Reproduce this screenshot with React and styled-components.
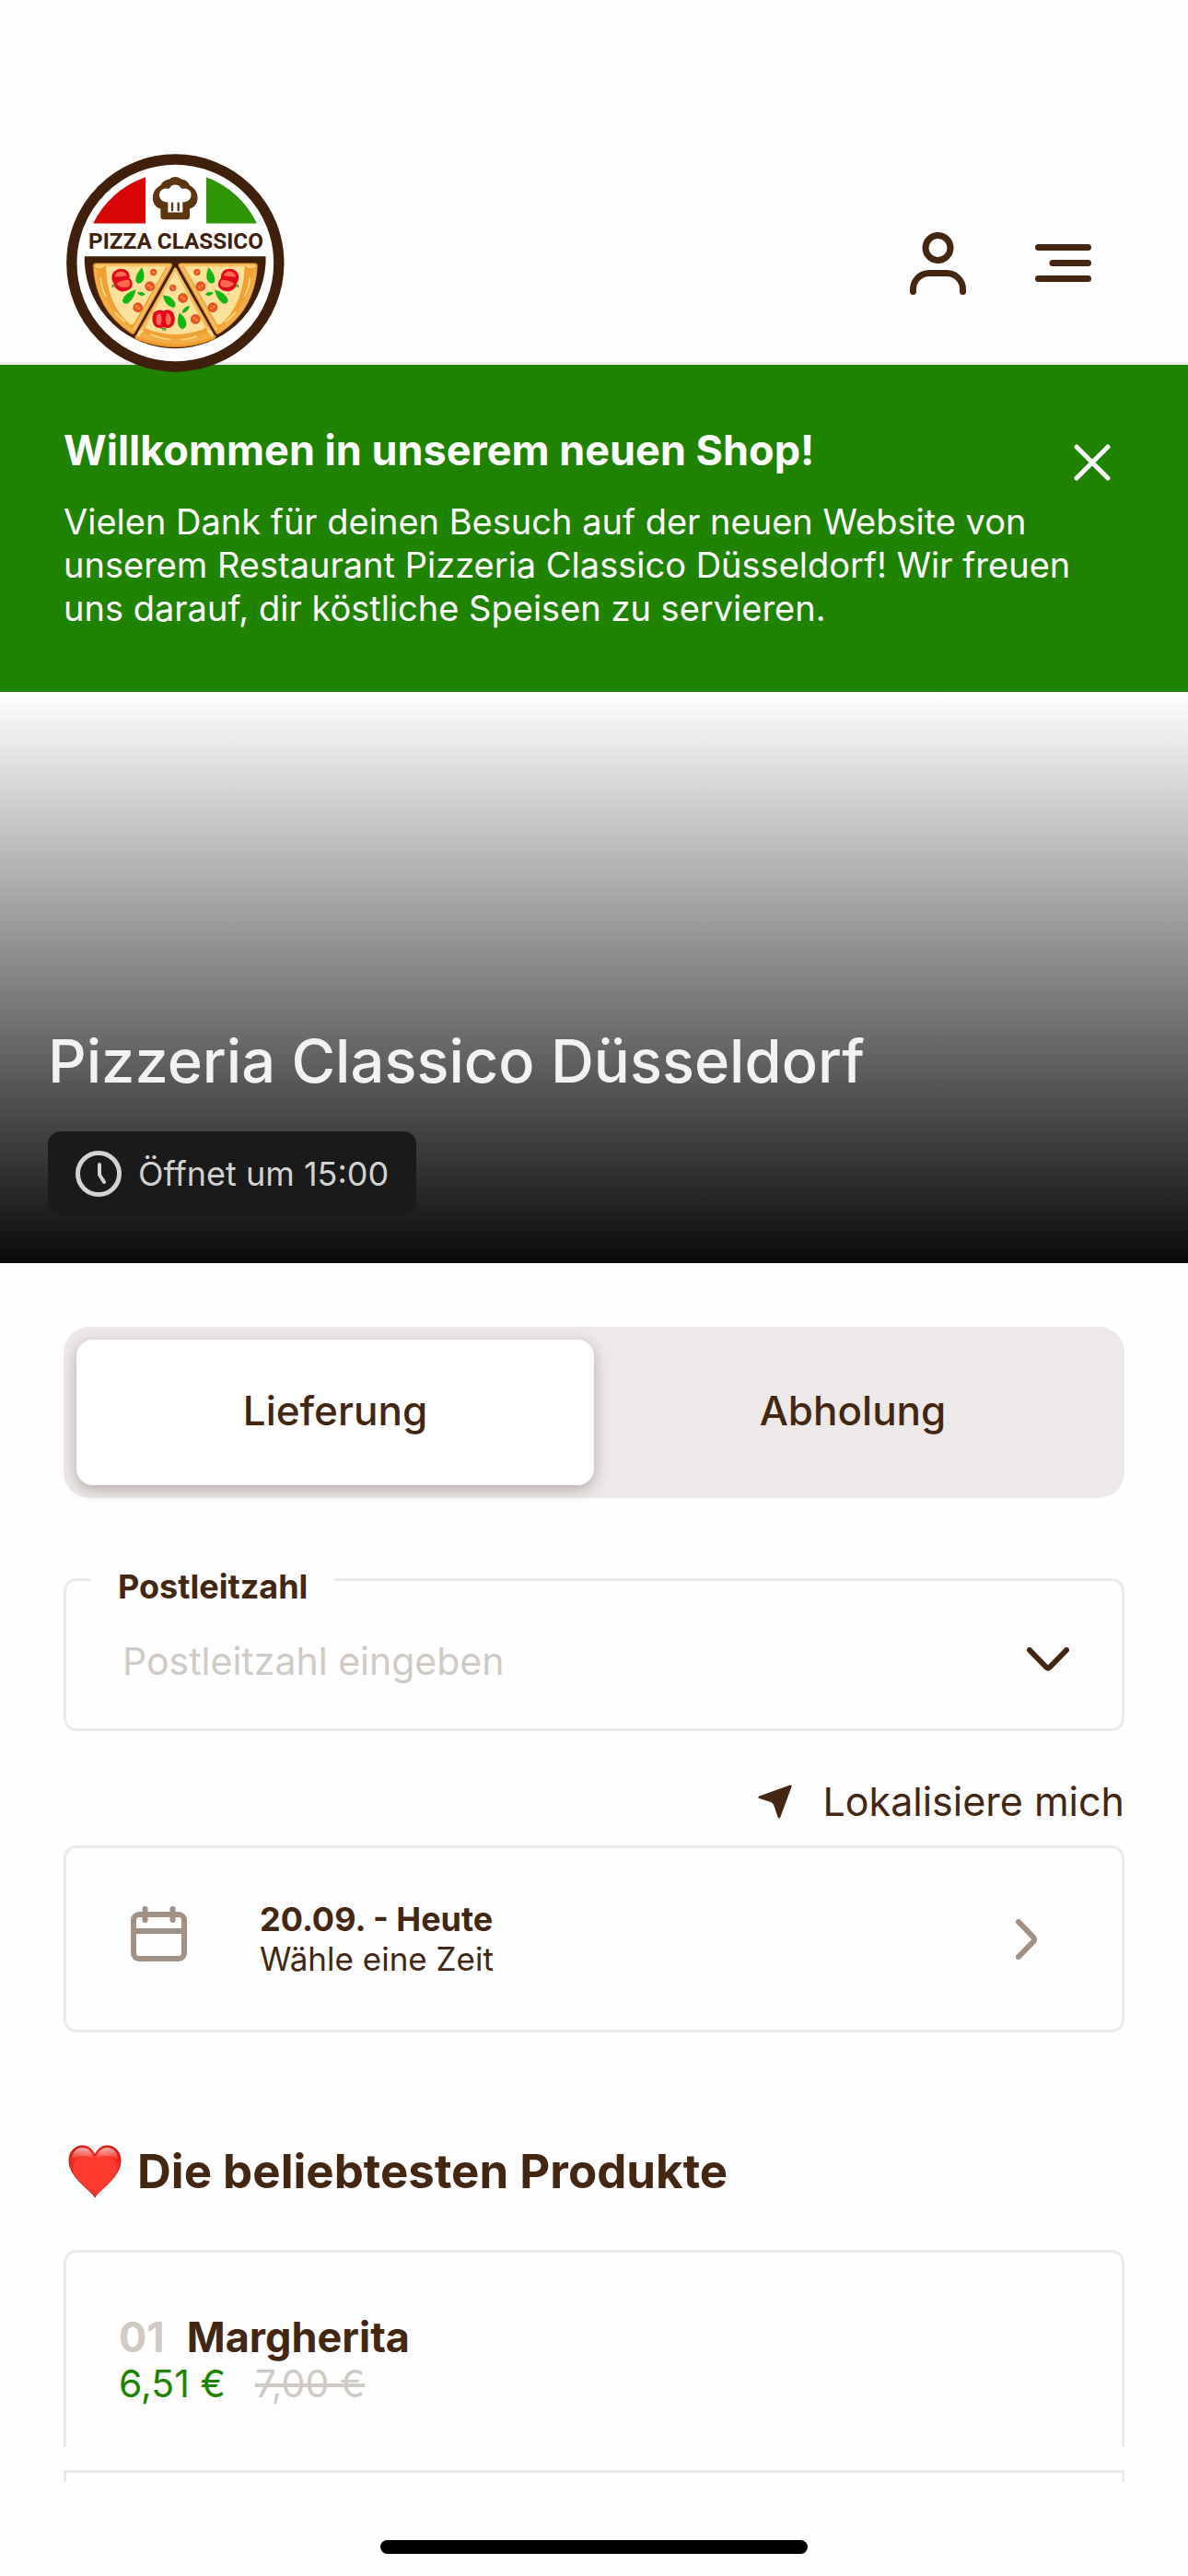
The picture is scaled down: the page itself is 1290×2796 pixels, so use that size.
import React, { useState } from 'react'
import styled, { createGlobalStyle } from 'styled-components'

const brown = '#432713'
const green = '#208300'
const line = '#ebe9e9'
const muted = '#a09184'
const faded = '#d0cac5'

const GlobalStyle = createGlobalStyle`
  * {
    box-sizing: border-box;
  }
  body {
    margin: 0;
    background: #fefefe;
    color: ${brown};
    font-family: Inter, "Liberation Sans", sans-serif;
  }
  button, input {
    font-family: inherit;
    color: inherit;
  }
  svg {
    display: block;
    flex: none;
  }
`

const Page = styled.div`
  display: flex;
  flex-direction: column;
  min-height: 100vh;
`

const Header = styled.header`
  display: flex;
  align-items: center;
  justify-content: space-between;
  padding: 178px 105px 0 72px;
  border-bottom: 3px solid ${line};
`

const LogoLink = styled.a`
  position: relative;
  z-index: 1;
  margin: -11px 0;
`

const HeaderActions = styled.nav`
  display: flex;
  align-items: center;
  gap: 75px;
`

const IconButton = styled.button`
  display: block;
  flex: none;
  padding: 0;
  border: 0;
  background: none;
  cursor: pointer;
`

const Banner = styled.section`
  display: flex;
  align-items: flex-start;
  justify-content: space-between;
  padding: 66px 84px 67px 69px;
  background: ${green};
  color: #fff;
`

const BannerClose = styled(IconButton)`
  margin-top: 20px;
`

const BannerTitle = styled.h2`
  margin: 0 0 27px;
  font-size: 45px;
  line-height: 54px;
  font-weight: 700;
`

const BannerText = styled.p`
  margin: 0;
  font-size: 38px;
  line-height: 47px;
`

const Hero = styled.section`
  display: flex;
  flex-direction: column;
  justify-content: flex-end;
  align-items: flex-start;
  gap: 34px;
  min-height: 620px;
  padding: 52px;
  background: linear-gradient(#fff, #0a0a0a);
`

const HeroTitle = styled.h1`
  margin: 0;
  color: #f2f2f2;
  font-size: 65px;
  line-height: 84px;
  font-weight: 500;
`

const OpeningChip = styled.div`
  display: flex;
  align-items: center;
  gap: 18px;
  height: 91px;
  padding: 0 30px;
  border-radius: 14px;
  background: #1a1a1a;
  color: #d2d2d2;
  font-size: 36px;
`

const Main = styled.main`
  padding: 69px;
  padding-bottom: 0;
`

const Tabs = styled.div`
  display: grid;
  grid-template-columns: 1fr 1fr;
  padding: 14px;
  border-radius: 28px;
  background: #ede9e8;
`

const Tab = styled.button`
  height: 158px;
  padding: 0 0 4px;
  border: 0;
  border-radius: 18px;
  background: ${p => (p.$active ? '#fff' : 'none')};
  box-shadow: ${p => (p.$active ? '0 5px 16px rgba(60, 40, 40, 0.32)' : 'none')};
  font-size: 44px;
  font-weight: 500;
  cursor: pointer;
`

const Field = styled.div`
  position: relative;
  display: flex;
  align-items: center;
  height: 166px;
  margin-top: 87px;
  padding: 10px 57px 0 59px;
  border: 3px solid ${line};
  border-radius: 14px;
`

const FieldLabel = styled.label`
  position: absolute;
  top: -15px;
  left: 27px;
  padding: 0 29px;
  background: #fefefe;
  font-size: 36px;
  line-height: 43px;
  font-weight: 700;
`

const FieldInput = styled.input`
  flex: 1;
  min-width: 0;
  height: 100%;
  padding: 3px 2px 0;
  border: 0;
  outline: 0;
  background: none;
  font-size: 41px;
  &::placeholder {
    color: ${faded};
    opacity: 1;
  }
`

const LocateButton = styled.button`
  display: flex;
  align-items: center;
  gap: 33px;
  margin: 50px 0 22px auto;
  padding: 0;
  border: 0;
  background: none;
  font-size: 43px;
  line-height: 52px;
  cursor: pointer;
`

const TimeButton = styled.button`
  display: flex;
  align-items: center;
  width: 100%;
  height: 203px;
  padding: 0 92px 0 70px;
  border: 3px solid ${line};
  border-radius: 14px;
  background: none;
  text-align: left;
  font-size: 35px;
  line-height: 43px;
  cursor: pointer;
`

const TimeText = styled.span`
  flex: 1;
  margin-left: 79px;
  b {
    display: block;
    font-size: 36px;
    font-weight: 700;
  }
`

const SectionTitle = styled.h2`
  display: flex;
  align-items: center;
  gap: 17px;
  margin: 121px 0 55px;
  padding-left: 5px;
  font-size: 51px;
  line-height: 60px;
  font-weight: 700;
`

const ProductList = styled.div`
  display: grid;
  gap: 25px;
`

const ProductCard = styled.article`
  padding: 66px 57px 45px;
  border: 3px solid ${line};
  border-bottom: 0;
  border-radius: 14px 14px 0 0;
`

const NextCard = styled.div`
  height: 13px;
  border: 3px solid ${line};
  border-bottom: 0;
`

const ProductName = styled.h3`
  margin: 0;
  font-size: 45px;
  line-height: 52px;
  font-weight: 700;
  span {
    margin-right: 24px;
    color: ${faded};
  }
`

const Prices = styled.p`
  display: flex;
  gap: 32px;
  margin: 0;
  color: ${green};
  font-size: 41px;
  line-height: 48px;
  ins {
    text-decoration: none;
  }
  del {
    color: ${faded};
  }
`

const HomeIndicator = styled.div`
  width: 36%;
  height: 15px;
  margin: auto auto 24px;
  border-radius: 8px;
  background: #000;
`

// one slice pointing up, drawn at the lower middle of the pan
const Slice = () => (
  <g>
    <path d="M420 420 L552 645 Q552 652 545 656 Q420 706 294 656 Q287 652 290 644 Z" fill="#efa133" stroke="#c97a1c" strokeWidth="2" />
    <path d="M301 628 Q420 682 539 628 L545 645 Q420 696 295 645 Z" fill="#f3ad45" />
    <path d="M420 432 L519 610 Q520 618 510 623 Q420 656 330 623 Q318 618 321 610 Z" fill="#fde09a" />
    <path d="M420 424 L321 612 L303 634 M420 424 L519 612 L537 634" fill="none" stroke="#f6bf62" strokeWidth="8" />
    <path d="M419 412 L288 642 M421 412 L552 642" fill="none" stroke="#3e200c" strokeWidth="7" />
    <path d="M340 640 Q372 654 402 656 M440 656 Q472 655 488 646" fill="none" stroke="#fbd583" strokeWidth="5" strokeLinecap="round" />
    <path d="M300 644 Q302 632 312 628 M540 644 Q538 632 528 628" fill="none" stroke="#fbe0a0" strokeWidth="7" strokeLinecap="round" />
    <g fill="#ee5426" stroke="#c93c14" strokeWidth="2">
      <circle cx="412" cy="488" r="10" />
      <circle cx="445" cy="521" r="15" />
      <circle cx="486" cy="590" r="15" />
    </g>
    <g fill="#fb9a3c">
      <circle cx="409" cy="486" r="3" />
      <circle cx="414" cy="491" r="3" />
      <circle cx="441" cy="518" r="4" />
      <circle cx="449" cy="524" r="4" />
      <circle cx="482" cy="587" r="4" />
      <circle cx="490" cy="593" r="4" />
    </g>
    <g fill="#12b812" stroke="#0a9410" strokeWidth="1">
      <path d="M380 513 Q408 514 418 535 Q423 550 414 552 Q388 548 380 513Z" />
      <path d="M434 570 Q456 586 456 606 Q454 620 442 622 Q420 610 434 570Z" />
      <path d="M466 547 Q464 566 443 570 Q444 552 466 547Z" />
    </g>
    <path d="M382 616 l-14 4 l9 2 l1 8 l5 -6 l5 8 l0 -9 l8 0 z" fill="#6d9a3a" />
    <path d="M382 563 Q398 555 412 567 Q424 588 414 608 Q400 624 382 616 Q362 624 350 608 Q340 588 350 568 Q366 555 382 563Z" fill="#e3071b" />
    <path d="M370 570 Q382 590 370 610 Q356 608 358 590 Q358 574 370 570Z M394 570 Q382 590 394 610 Q408 608 406 590 Q406 574 394 570Z" fill="#fb6a4f" />
  </g>
)

const SideSlice = () => (
  <g>
    <path d="M158 408 L404 408 Q413 410 409 418 L290 634 Q284 643 275 636 Q160 560 152 416 Q152 408 158 408Z" fill="#efa133" stroke="#c97a1c" strokeWidth="2" />
    <path d="M164 424 Q176 550 284 624 L274 632 Q164 560 154 424Z" fill="#f3ad45" />
    <path d="M194 416 L392 416 L286 602 Q280 612 270 605 Q196 540 194 416Z" fill="#fde09a" />
    <path d="M162 414 L402 414 L284 626" fill="none" stroke="#f6bf62" strokeWidth="8" strokeLinejoin="round" />
    <path d="M176 456 Q180 490 194 516 M224 568 Q240 588 256 598 M160 417 Q172 424 184 418" fill="none" stroke="#fbd583" strokeWidth="5" strokeLinecap="round" />
    <g fill="#ee5426" stroke="#c93c14" strokeWidth="2">
      <circle cx="349" cy="437" r="10" />
      <circle cx="337" cy="483" r="15" />
      <circle cx="298" cy="552" r="15" />
    </g>
    <g fill="#fb9a3c">
      <circle cx="346" cy="436" r="3" />
      <circle cx="352" cy="439" r="3" />
      <circle cx="333" cy="480" r="4" />
      <circle cx="341" cy="486" r="4" />
      <circle cx="294" cy="549" r="4" />
      <circle cx="302" cy="555" r="4" />
    </g>
    <g fill="#12b812" stroke="#0a9410" strokeWidth="1">
      <path d="M311 422 Q324 452 312 468 Q300 478 292 468 Q288 446 311 422Z" />
      <path d="M291 495 Q284 524 266 538 Q250 542 248 528 Q256 504 291 495Z" />
      <path d="M296 504 Q312 498 322 509 Q308 520 296 504Z" />
    </g>
    <path d="M214 476 l-2 12 l7 -4 l6 5 l1 -9 l6 -3 z" fill="#6d9a3a" />
    <path d="M218 437 Q234 420 256 428 Q272 436 271 456 Q284 470 278 486 Q266 500 246 500 Q226 496 222 478 Q206 456 218 437Z" fill="#e3071b" />
    <path d="M222 452 Q226 436 242 434 Q260 436 262 448 Q244 452 222 452Z M228 474 Q246 462 268 462 Q278 474 268 484 Q240 492 228 474Z" fill="#fb6a4f" />
  </g>
)

const Logo = () => (
  <svg width="237" height="237" viewBox="65 51 711 712" role="img" aria-label="Pizza Classico">
    <circle cx="420" cy="407" r="338" fill="#fff" stroke="#3e200c" strokeWidth="34" />
    <path d="M323 127 V278 H152 A297 297 0 0 1 323 127Z" fill="#d90404" />
    <path d="M521 127 V278 H686 A297 297 0 0 0 521 127Z" fill="#2e9507" />
    <path
      d="M372 262 V230 C340 222 336 172 372 154 C380 136 396 136 402 133 C412 124 428 124 438 133 C446 136 460 136 467 154 C503 172 500 222 467 230 V255 Q467 265 457 265 H382 Q372 265 372 255Z"
      fill="#5c3611"
    />
    <path
      d="M396 242 V209 C362 210 358 166 390 164 Q398 166 402 162 C406 148 434 148 438 162 Q442 166 450 164 C482 166 478 210 444 209 V242Z"
      fill="#fff"
    />
    <path d="M410 212 V235 M430 212 V235" stroke="#5c3611" strokeWidth="7" strokeLinecap="round" />
    <text x="422" y="361" textAnchor="middle" fontFamily="Roboto, sans-serif" fontSize="73" fontWeight="700" fill="#3e200c">
      PIZZA CLASSICO
    </text>
    <path d="M124 385 H715 V407 A296 296 0 0 1 124 407Z" fill="#3e200c" />
    <SideSlice />
    <g transform="matrix(-1 0 0 1 840 0)">
      <SideSlice />
    </g>
    <Slice />
  </svg>
)

const UserIcon = () => (
  <svg width="61" height="68" viewBox="0 0 61 68" fill="none" stroke="currentColor" strokeWidth="7" strokeLinecap="round">
    <circle cx="30.5" cy="17" r="13.5" />
    <path d="M3.5 64.5V62A17.5 17.5 0 0 1 21 44.5h19A17.5 17.5 0 0 1 57.5 62v2.5" />
  </svg>
)

const MenuIcon = () => (
  <svg width="61" height="41" viewBox="0 0 61 41" fill="none" stroke="currentColor" strokeWidth="7" strokeLinecap="round">
    <path d="M3.5 3.5h54M19 20.5h38.5M3.5 37.5h54" />
  </svg>
)

const CloseIcon = () => (
  <svg width="40" height="40" viewBox="0 0 40 40" fill="none" stroke="#fff" strokeWidth="5" strokeLinecap="round">
    <path d="M3 3l34 34M37 3L3 37" />
  </svg>
)

const ClockIcon = () => (
  <svg width="50" height="50" viewBox="0 0 50 50" fill="none" stroke="currentColor" strokeLinecap="round" strokeLinejoin="round">
    <circle cx="25" cy="25" r="22.5" strokeWidth="5" />
    <path d="M26 15v11l5 8" strokeWidth="4" />
  </svg>
)

const ChevronDown = () => (
  <svg width="46" height="26" viewBox="0 0 46 26" fill="none" stroke="currentColor" strokeWidth="6" strokeLinecap="round" strokeLinejoin="round">
    <path d="M3 3L21 21.5Q23 23.5 25 21.5L43 3" />
  </svg>
)

const ChevronRight = () => (
  <svg width="23" height="44" viewBox="0 0 23 44" fill="none" stroke={muted} strokeWidth="6" strokeLinecap="round" strokeLinejoin="round">
    <path d="M3 3L19 19.5Q21 22 19 24.5L3 41" />
  </svg>
)

const ArrowIcon = () => (
  <svg width="37" height="37" viewBox="0 0 37 37" fill="currentColor">
    <path d="M35 0.5Q37 0 36.5 2.5L24.5 35Q23 38 21.5 35L17.5 23Q16.5 20 14 19L1.5 15Q-1 14 1.5 12.5Z" />
  </svg>
)

const CalendarIcon = () => (
  <svg width="61" height="72" viewBox="0 0 61 72" fill="none" stroke={muted} strokeWidth="6" strokeLinecap="round">
    <rect x="3" y="9" width="55" height="48" rx="6" />
    <path d="M3 27h55M15.5 3v12M45.5 3v12" />
  </svg>
)

const HeartIcon = () => (
  <svg width="58" height="58" viewBox="0 0 58 58">
    <defs>
      <radialGradient id="heart" cx="50%" cy="50%" r="60%">
        <stop offset="0" stopColor="#ff3a2c" />
        <stop offset="0.65" stopColor="#fb3b30" />
        <stop offset="1" stopColor="#d8160f" />
      </radialGradient>
      <linearGradient id="shine" x1="0" y1="0" x2="0" y2="1">
        <stop offset="0" stopColor="#fff" stopOpacity="0.65" />
        <stop offset="1" stopColor="#fff" stopOpacity="0" />
      </linearGradient>
    </defs>
    <path
      d="M29 57C26 50 1 36 1 17C1 7 8 1 15.5 1C22 1 27 5 29 12C31 5 36 1 42.5 1C50 1 57 7 57 17C57 36 32 50 29 57Z"
      fill="url(#heart)"
      stroke="#c4150d"
      strokeWidth="1"
    />
    <path d="M4 16C4 7 10 3 15.5 3C22 3 26 8 27 15C20 10 10 12 4 16Z M54 16C54 7 48 3 42.5 3C36 3 32 8 31 15C38 10 48 12 54 16Z" fill="url(#shine)" />
  </svg>
)

const tabs = ['Lieferung', 'Abholung']

const App = () => {
  const [tab, setTab] = useState('Lieferung')
  const [showBanner, setShowBanner] = useState(true)

  return (
    <Page>
      <GlobalStyle />
      <Header>
        <LogoLink href="#">
          <Logo />
        </LogoLink>
        <HeaderActions>
          <IconButton aria-label="Konto"><UserIcon /></IconButton>
          <IconButton aria-label="Menü"><MenuIcon /></IconButton>
        </HeaderActions>
      </Header>
      {showBanner && (
        <Banner>
          <div>
            <BannerTitle>Willkommen in unserem neuen Shop!</BannerTitle>
            <BannerText>
              Vielen Dank für deinen Besuch auf der neuen Website von unserem Restaurant
              Pizzeria Classico Düsseldorf! Wir freuen uns darauf, dir köstliche Speisen zu servieren.
            </BannerText>
          </div>
          <BannerClose aria-label="Schließen" onClick={() => setShowBanner(false)}>
            <CloseIcon />
          </BannerClose>
        </Banner>
      )}
      <Hero>
        <HeroTitle>Pizzeria Classico Düsseldorf</HeroTitle>
        <OpeningChip>
          <ClockIcon />
          <span>Öffnet um 15:00</span>
        </OpeningChip>
      </Hero>
      <Main>
        <Tabs role="tablist">
          {tabs.map(name => (
            <Tab key={name} role="tab" aria-selected={tab === name} $active={tab === name} onClick={() => setTab(name)}>
              {name}
            </Tab>
          ))}
        </Tabs>
        <Field>
          <FieldLabel htmlFor="plz">Postleitzahl</FieldLabel>
          <FieldInput id="plz" placeholder="Postleitzahl eingeben" />
          <IconButton aria-label="Auswahl öffnen"><ChevronDown /></IconButton>
        </Field>
        <LocateButton>
          <ArrowIcon />
          Lokalisiere mich
        </LocateButton>
        <TimeButton>
          <CalendarIcon />
          <TimeText>
            <b>20.09. - Heute</b>
            Wähle eine Zeit
          </TimeText>
          <ChevronRight />
        </TimeButton>
        <SectionTitle>
          <HeartIcon />
          Die beliebtesten Produkte
        </SectionTitle>
        <ProductList>
          <ProductCard>
            <ProductName><span>01</span>Margherita</ProductName>
            <Prices>
              <ins>6,51 €</ins>
              <del>7,00 €</del>
            </Prices>
          </ProductCard>
          <NextCard />
        </ProductList>
      </Main>
      <HomeIndicator />
    </Page>
  )
}

export default App
